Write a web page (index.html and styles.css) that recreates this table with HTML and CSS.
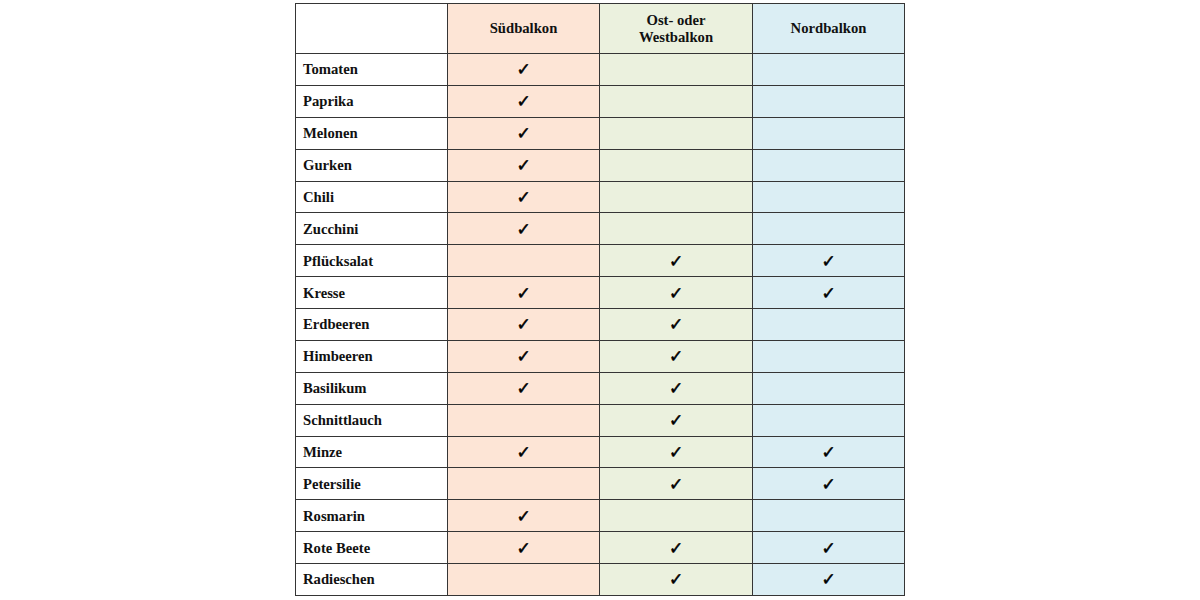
FILE: index.html
```html
<!DOCTYPE html>
<html lang="de">
<head>
<meta charset="utf-8">
<title>Balkonpflanzen</title>
<link rel="stylesheet" href="styles.css">
</head>
<body>
<div class="wrap">
<table class="grid">
<colgroup><col class="c0"><col class="c1"><col class="c2"><col class="c3"></colgroup>
<thead>
<tr><th class="blank"></th><th class="sued">Südbalkon</th><th class="ost">Ost- oder<br>Westbalkon</th><th class="nord">Nordbalkon</th></tr>
</thead>
<tbody>
<tr><td class="name">Tomaten</td><td class="sued">✓</td><td class="ost"></td><td class="nord"></td></tr>
<tr><td class="name">Paprika</td><td class="sued">✓</td><td class="ost"></td><td class="nord"></td></tr>
<tr><td class="name">Melonen</td><td class="sued">✓</td><td class="ost"></td><td class="nord"></td></tr>
<tr><td class="name">Gurken</td><td class="sued">✓</td><td class="ost"></td><td class="nord"></td></tr>
<tr><td class="name">Chili</td><td class="sued">✓</td><td class="ost"></td><td class="nord"></td></tr>
<tr><td class="name">Zucchini</td><td class="sued">✓</td><td class="ost"></td><td class="nord"></td></tr>
<tr><td class="name">Pflücksalat</td><td class="sued"></td><td class="ost">✓</td><td class="nord">✓</td></tr>
<tr><td class="name">Kresse</td><td class="sued">✓</td><td class="ost">✓</td><td class="nord">✓</td></tr>
<tr><td class="name">Erdbeeren</td><td class="sued">✓</td><td class="ost">✓</td><td class="nord"></td></tr>
<tr><td class="name">Himbeeren</td><td class="sued">✓</td><td class="ost">✓</td><td class="nord"></td></tr>
<tr><td class="name">Basilikum</td><td class="sued">✓</td><td class="ost">✓</td><td class="nord"></td></tr>
<tr><td class="name">Schnittlauch</td><td class="sued"></td><td class="ost">✓</td><td class="nord"></td></tr>
<tr><td class="name">Minze</td><td class="sued">✓</td><td class="ost">✓</td><td class="nord">✓</td></tr>
<tr><td class="name">Petersilie</td><td class="sued"></td><td class="ost">✓</td><td class="nord">✓</td></tr>
<tr><td class="name">Rosmarin</td><td class="sued">✓</td><td class="ost"></td><td class="nord"></td></tr>
<tr><td class="name">Rote Beete</td><td class="sued">✓</td><td class="ost">✓</td><td class="nord">✓</td></tr>
<tr><td class="name">Radieschen</td><td class="sued"></td><td class="ost">✓</td><td class="nord">✓</td></tr>
</tbody>
</table>
</div>
</body>
</html>
```
FILE: styles.css
```css
html, body {
  margin: 0;
  padding: 0;
  background: #ffffff;
}
.wrap {
  padding-top: 3px;
  display: flex;
  justify-content: center;
}
.grid {
  border-collapse: collapse;
  table-layout: fixed;
  width: 609px;
  font-family: "Liberation Serif", "Times New Roman", serif;
  font-weight: bold;
  font-size: 14.67px;
  color: #111;
}
.c0 { width: 152px; }
.c1 { width: 152px; }
.c2 { width: 153px; }
.c3 { width: 152px; }
.grid th, .grid td {
  border: 1px solid #353535;
  padding: 0;
  vertical-align: middle;
}
.grid thead tr { height: 50px; }
.grid tbody tr { height: 31.88px; }
.grid th {
  text-align: center;
  line-height: 17px;
  font-weight: bold;
}
.grid td {
  text-align: center;
  font-family: "DejaVu Sans", sans-serif;
  font-size: 17px;
  font-weight: bold;
  line-height: 20px;
  color: #000;
  -webkit-text-stroke: 0.6px #000;
}
.grid td.name {
  text-align: left;
  padding-left: 7px;
  font-family: "Liberation Serif", "Times New Roman", serif;
  font-size: 14.67px;
  color: #111;
  -webkit-text-stroke: 0;
}
.blank { background: #ffffff; }
.sued { background: #fde5d6; }
.ost { background: #ebf1de; }
.nord { background: #dbeef4; }
```
